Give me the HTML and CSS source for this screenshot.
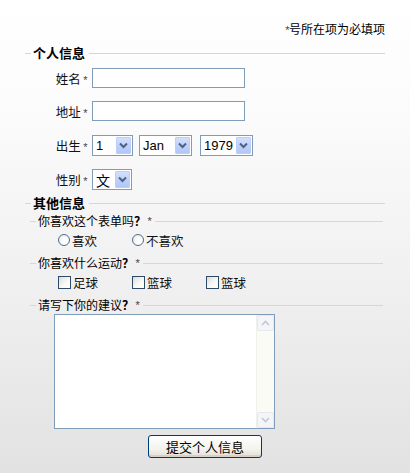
FILE: index.html
```html
<!DOCTYPE html>
<html lang="zh">
<head>
<meta charset="utf-8">
<title>个人信息表单</title>
<link rel="stylesheet" href="styles.css">
</head>
<body>
<form class="page">
  <div class="note"><span class="star">*</span>号所在项为必填项</div>

  <div class="legend main">个人信息</div>
  <div class="row r1"><label class="lbl">姓名<span class="star">*</span></label><input class="txt" type="text"></div>
  <div class="row r2"><label class="lbl">地址<span class="star">*</span></label><input class="txt" type="text"></div>
  <div class="row r3"><label class="lbl">出生<span class="star">*</span></label>
    <span class="sel w1"><span class="val">1</span><span class="arr"><svg width="9" height="7" viewBox="0 0 9 7"><path d="M1 1.5 L4.5 5 L8 1.5" fill="none" stroke="#4d6185" stroke-width="2"/></svg></span></span>
    <span class="sel w2"><span class="val">Jan</span><span class="arr"><svg width="9" height="7" viewBox="0 0 9 7"><path d="M1 1.5 L4.5 5 L8 1.5" fill="none" stroke="#4d6185" stroke-width="2"/></svg></span></span>
    <span class="sel w3"><span class="val">1979</span><span class="arr"><svg width="9" height="7" viewBox="0 0 9 7"><path d="M1 1.5 L4.5 5 L8 1.5" fill="none" stroke="#4d6185" stroke-width="2"/></svg></span></span>
  </div>
  <div class="row r4"><label class="lbl">性别<span class="star">*</span></label>
    <span class="sel w4"><span class="val cjk">文</span><span class="arr"><svg width="9" height="7" viewBox="0 0 9 7"><path d="M1 1.5 L4.5 5 L8 1.5" fill="none" stroke="#4d6185" stroke-width="2"/></svg></span></span>
  </div>

  <div class="legend main l2">其他信息</div>
  <div class="legend sub s1">你喜欢这个表单吗<b>？</b><span class="star">*</span></div>
  <div class="opts o1">
    <span class="opt"><span class="radio"></span>喜欢</span>
    <span class="opt"><span class="radio"></span>不喜欢</span>
  </div>
  <div class="legend sub s2">你喜欢什么运动<b>？</b><span class="star">*</span></div>
  <div class="opts o2">
    <span class="opt"><span class="check"></span>足球</span>
    <span class="opt"><span class="check"></span>篮球</span>
    <span class="opt"><span class="check"></span>篮球</span>
  </div>
  <div class="legend sub s3">请写下你的建议<b>？</b><span class="star">*</span></div>
  <div class="area">
    <textarea class="ta"></textarea>
    <div class="sb">
      <span class="sbtn"><svg width="9" height="6" viewBox="0 0 9 6"><path d="M1 5 L4.5 1.5 L8 5" fill="none" stroke="#c4c8d0" stroke-width="1.6"/></svg></span>
      <span class="track"></span>
      <span class="sbtn"><svg width="9" height="6" viewBox="0 0 9 6"><path d="M1 1 L4.5 4.5 L8 1" fill="none" stroke="#c4c8d0" stroke-width="1.6"/></svg></span>
    </div>
  </div>
  <div class="actions"><button class="btn" type="button">提交个人信息</button></div>
</form>
</body>
</html>
```

FILE: styles.css
```css
html, body {
  margin: 0;
  padding: 0;
}
body {
  width: 410px;
  height: 473px;
  overflow: hidden;
  background: linear-gradient(to bottom, #ffffff 0%, #fbfbfb 25%, #f0f0f0 60%, #e2e2e2 100%);
  font-family: "Noto Sans CJK SC", "Liberation Sans", sans-serif;
  font-size: 12px;
  color: #000;
}
.page {
  display: flex;
  flex-direction: column;
  margin: 0;
}
.star {
  color: #444;
  font-family: "Liberation Sans", sans-serif;
  font-size: 11px;
  font-style: italic;
  margin-left: 1px;
}
.note {
  margin-top: 21px;
  height: 16px;
  line-height: 16px;
  text-align: right;
  padding-right: 25px;
}
.legend {
  display: flex;
  align-items: center;
  height: 16px;
  line-height: 16px;
  white-space: nowrap;
}
.legend::before {
  content: "";
  width: 6px;
  height: 1px;
  background: #d8d8c4;
  margin-right: 2px;
}
.legend::after {
  content: "";
  flex: 1;
  height: 1px;
  background: #d8d8c4;
  margin-left: 4px;
}
.legend.main {
  margin-left: 25px;
  width: 360px;
  font-weight: bold;
  font-size: 13px;
  color: #000;
  margin-top: 8px;
}
.legend.main.l2 { margin-top: 5px; }
.legend.sub {
  margin-left: 30px;
  width: 353px;
  color: #000;
}
.legend.sub b { font-weight: bold; }
.legend.s1 { margin-top: 2px; }
.legend.s2 { margin-top: 7px; }
.legend.s3 { margin-top: 7px; }

.row {
  display: flex;
  align-items: center;
  padding-left: 25px;
}
.r1 { margin-top: 7px; height: 20px; }
.r2 { margin-top: 13px; height: 20px; }
.r3 { margin-top: 14px; height: 21px; }
.r4 { margin-top: 13px; height: 21px; }
.lbl {
  width: 67px;
  text-align: right;
  padding-right: 5px;
  box-sizing: border-box;
  color: #111;
  font-size: 12.5px;
}
.lbl .star { margin-left: 2px; }
.txt {
  width: 153px;
  height: 20px;
  box-sizing: border-box;
  border: 1px solid #7f9db9;
  background: #fff;
  margin: 0;
  padding: 0 2px;
  font: inherit;
}
.sel {
  display: inline-flex;
  align-items: center;
  justify-content: space-between;
  height: 21px;
  box-sizing: border-box;
  border: 1px solid #7f9db9;
  background: #fff;
  padding: 0 1px 0 3px;
  font-family: "Liberation Sans", sans-serif;
  font-size: 13px;
}
.sel .val { white-space: nowrap; }
.sel .val.cjk { font-family: "Noto Sans CJK SC", sans-serif; font-size: 14px; }
.w1 { width: 41px; }
.w2 { width: 53px; margin-left: 6px; }
.w3 { width: 53px; margin-left: 8px; }
.w4 { width: 40px; }
.arr {
  flex: none;
  width: 15px;
  height: 17px;
  box-sizing: border-box;
  border: 1px solid #bccef9;
  border-radius: 1px;
  background: linear-gradient(to bottom, #d3e0fd 0%, #bfd1fb 50%, #b0c7f8 100%);
  display: flex;
  align-items: center;
  justify-content: center;
}
.opts {
  display: flex;
  align-items: center;
  height: 16px;
  padding-left: 58px;
}
.o1 { margin-top: 3px; }
.o2 { margin-top: 3px; }
.opt {
  display: inline-flex;
  align-items: center;
  width: 74px;
  color: #111;
  white-space: nowrap;
  font-size: 12.5px;
}
.radio {
  width: 12px;
  height: 12px;
  box-sizing: border-box;
  border-radius: 50%;
  border: 1px solid #4e6d91;
  background: radial-gradient(circle at 60% 60%, #ffffff 30%, #e3e3de 100%);
  margin-right: 2px;
}
.check {
  width: 13px;
  height: 13px;
  box-sizing: border-box;
  border: 1px solid #2e4a68;
  background: linear-gradient(135deg, #dcdcd6 0%, #fafaf8 60%, #ffffff 100%);
  margin-right: 2px;
}
.area {
  margin-top: 1px;
  margin-left: 54px;
  width: 221px;
  height: 115px;
  box-sizing: border-box;
  border: 1px solid #7f9db9;
  background: #fff;
  display: flex;
}
.ta {
  flex: 1;
  border: 0;
  margin: 0;
  padding: 2px;
  resize: none;
  outline: none;
  background: #fff;
  font: inherit;
}
.sb {
  width: 17px;
  display: flex;
  flex-direction: column;
  background: #fbfbf6;
  border-left: 1px solid #f1f1ea;
}
.sbtn {
  height: 16px;
  box-sizing: border-box;
  border: 1px solid #e6e8ee;
  border-radius: 2px;
  background: #f4f5f8;
  display: flex;
  align-items: center;
  justify-content: center;
}
.track { flex: 1; }
.actions {
  display: flex;
  justify-content: center;
  margin-top: 6px;
}
.btn {
  width: 114px;
  height: 23px;
  box-sizing: border-box;
  border: 1px solid #003c74;
  border-radius: 3px;
  background: linear-gradient(to bottom, #ffffff 0%, #f4f3ee 60%, #e2dfd6 100%);
  box-shadow: inset 0 -2px 0 #d6d0c5;
  font-family: "Noto Sans CJK SC", sans-serif;
  font-size: 13px;
  color: #000;
  padding: 0;
  line-height: 20px;
}
```
